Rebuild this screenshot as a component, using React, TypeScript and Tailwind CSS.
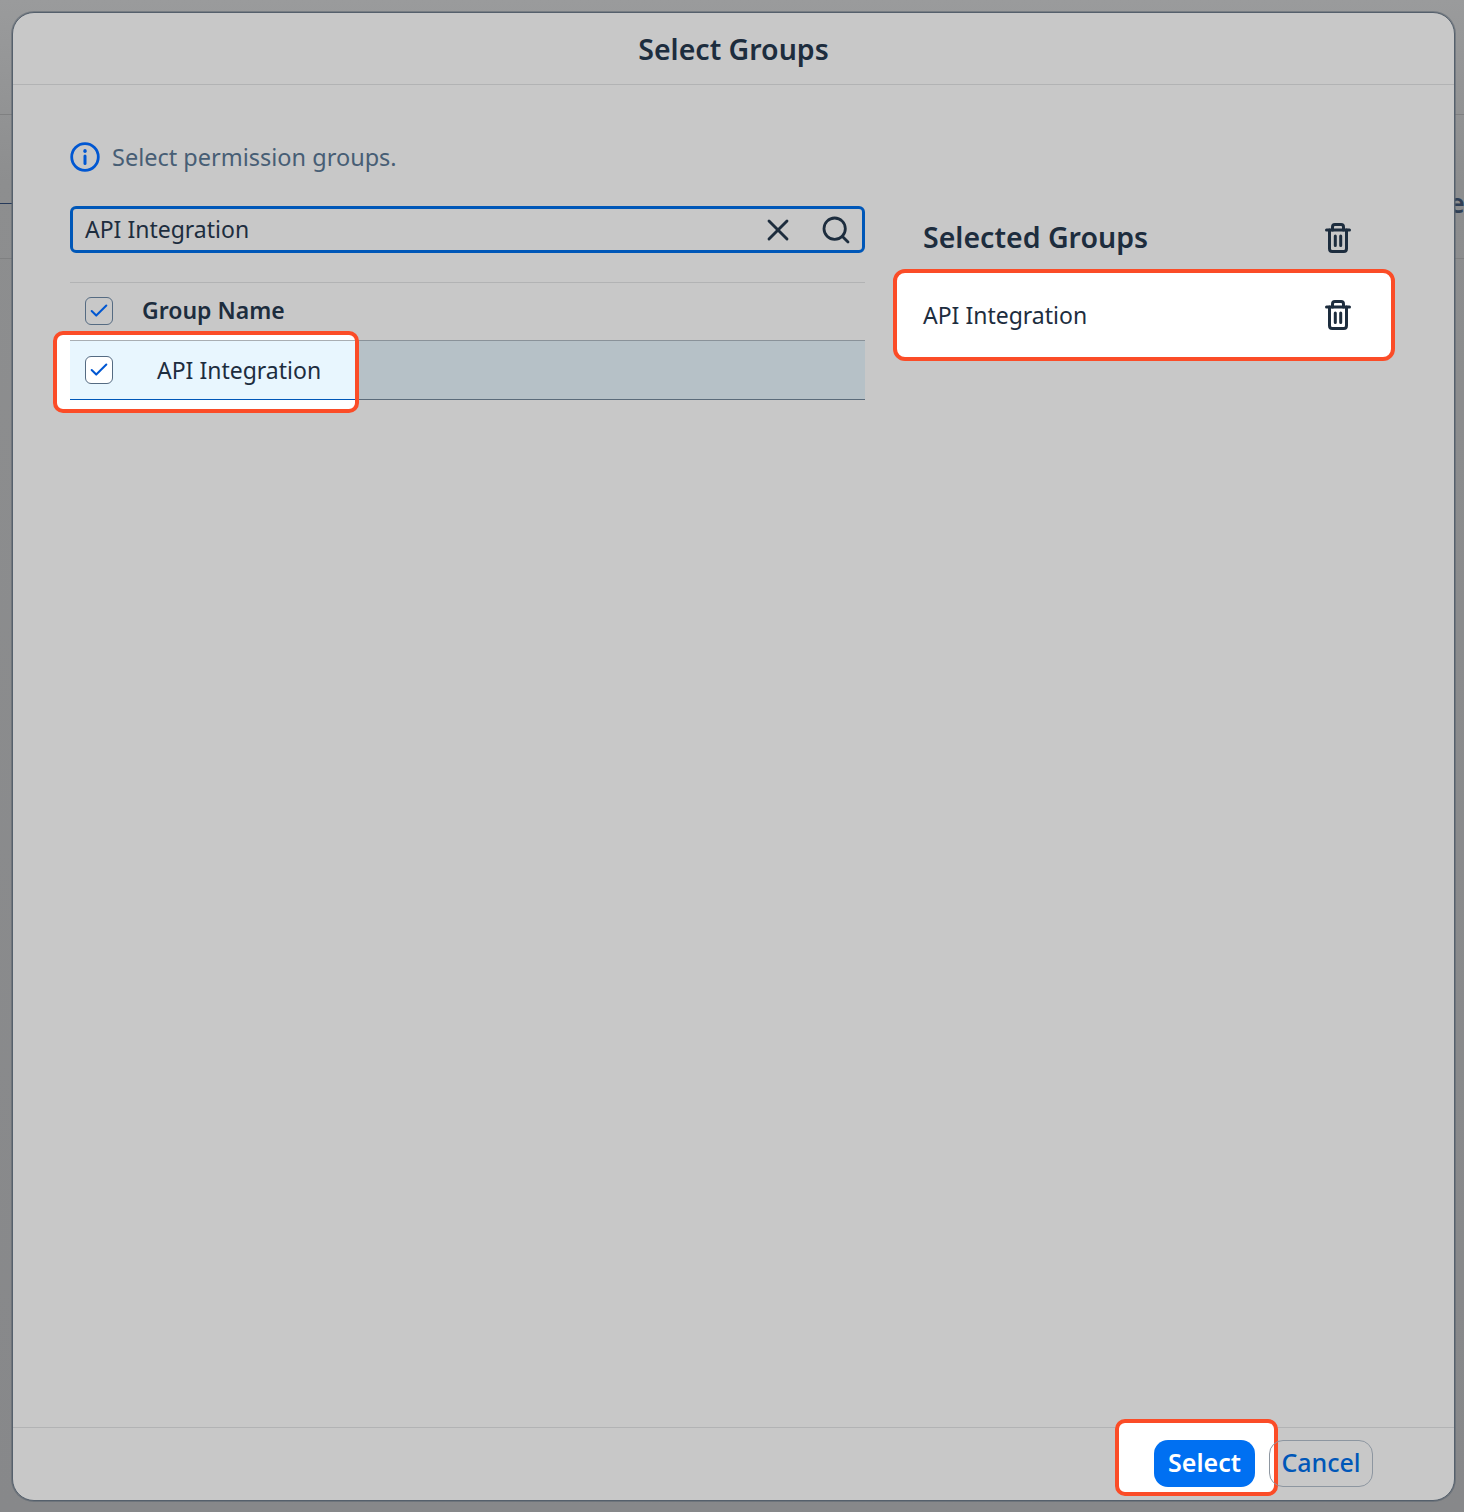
import React from 'react';
import { Search, X, Check } from 'lucide-react';

const font = "font-['Noto_Sans','Open_Sans',sans-serif]";

const TrashIcon: React.FC = () => (
    <svg width="26" height="30" viewBox="0 0 26 30" fill="none" stroke="#1d2d3e" strokeWidth="3" strokeLinecap="round" strokeLinejoin="round">
        <path d="M1.500 7h23" />
        <path d="M7.500 7V4c0-1.400 1-2.500 2.400-2.500h6.200c1.400 0 2.400 1.100 2.400 2.500v3" />
        <path d="M4.500 7v18.500c0 1.700 1.100 3 2.700 3h11.600c1.600 0 2.700-1.300 2.700-3V7" />
        <path d="M10.300 13v9.500M15.700 13v9.500" />
    </svg>
);

const CheckBox: React.FC<{ white?: boolean }> = ({ white }) => (
    <div className={`flex h-[28px] w-[28px] items-center justify-center rounded-[6px] border border-[#556b82] ${white ? 'bg-white' : ''}`}>
        <Check size={22} strokeWidth={2.200} className="text-[#0057d2]" />
    </div>
);

const App: React.FC = () => {
    return (
        <div className={`${font} relative h-[1512px] w-[1464px] overflow-hidden bg-linear-to-b from-[#9a9b9c] via-[#8d8e8f] via-[12%] to-[#87888a] p-3 text-[#1d2d3e]`}>
            {/* page behind the dim layer */}
            <div className="absolute left-0 top-[114px] h-px w-3 bg-[#7f8081]" />
            <div className="absolute left-0 top-[203px] h-px w-3 bg-[#263a5a]" />
            <div className="absolute left-0 top-[258px] h-px w-3 bg-[#7f8081]" />
            <div className="absolute right-0 top-[114px] h-px w-[10px] bg-[#7f8081]" />
            <div className="absolute right-0 top-[258px] h-px w-[10px] bg-[#7f8081]" />
            <span className="absolute left-[1449px] top-[185px] text-[27px] font-semibold leading-[36px] text-[#2f3f55]">e</span>

            <div className="relative flex h-[1489px] w-[1443px] flex-col overflow-hidden rounded-[22px] border border-[#55606c] bg-[#c8c8c8] shadow-[0_0_0_1px_rgba(85,96,108,0.5)]">
                <header className="flex h-[72px] shrink-0 items-center justify-center border-b border-[#b2b3b4] pt-px text-[28.500px] font-semibold">
                    Select Groups
                </header>

                <main className="flex flex-1 gap-[58px] pl-[57px] pt-[56px]">
                    {/* left column */}
                    <section className="w-[795px]">
                        <div className="flex h-[32px] items-center gap-[12px] text-[#475e75]">
                            <svg width="30" height="30" viewBox="0 0 30 30" fill="none" stroke="#0057d2" strokeWidth="2.800" strokeLinecap="round">
                                <circle cx="15" cy="15" r="13.300" />
                                <path d="M15 14v7.500" strokeWidth="3" />
                                <path d="M15 8.800v.4" strokeWidth="3.400" />
                            </svg>
                            <span className="pt-[2px] text-[23.500px] leading-none">Select permission groups.</span>
                        </div>

                        <div className="mt-[33px] flex h-[47px] items-center rounded-[6px] border-[3px] border-[#0057b8] pl-[12px] pr-[10px]">
                            <span className="flex-1 text-[23px] leading-none">API Integration</span>
                            <X size={36} strokeWidth={1.900} className="mr-[24px] text-[#1d2d3e]" />
                            <Search size={32} strokeWidth={2.100} className="text-[#1d2d3e]" />
                        </div>

                        <div className="mt-[29px] flex h-[58px] items-center border-t border-[#b2b3b4] pb-[2px] pl-[15px]">
                            <CheckBox />
                            <span className="ml-[29px] text-[23px] font-semibold leading-none">Group Name</span>
                        </div>

                        {/* annotated row */}
                        <div className="relative h-[60px] border-y border-t-[#8a9299] border-b-[#5b6b7a] bg-[#b6c1c7]">
                            <div className="absolute -top-[10px] left-[-17px] h-[82px] w-[306px] rounded-[10px] border-[4px] border-[#fb4c27] bg-white" />
                            <div className="absolute left-0 -top-px flex h-[60px] w-[285px] items-center border-y border-t-[#a9aeb3] border-b-[#0057b8] bg-[#e8f6fe] pl-[15px]">
                                <CheckBox white />
                                <span className="ml-[44px] text-[23px] leading-none">API Integration</span>
                            </div>
                        </div>
                    </section>

                    {/* right column */}
                    <section className="w-[472px] pt-[63px]">
                        <div className="flex h-[65px] items-center justify-between pr-[44px] pt-[2px]">
                            <h2 className="text-[28.500px] font-semibold leading-none">Selected Groups</h2>
                            <TrashIcon />
                        </div>
                        <div className="-ml-[30px] flex h-[92px] w-[502px] items-center justify-between rounded-[12px] border-[4px] border-[#fb4c27] bg-white pl-[26px] pr-[40px]">
                            <span className="text-[23px] leading-none">API Integration</span>
                            <TrashIcon />
                        </div>
                    </section>
                </main>

                <footer className="relative flex h-[73px] shrink-0 items-center justify-end border-t border-[#b2b3b4] pb-[2px] pr-[81px]">
                    <div className="absolute left-[1102px] top-[-9px] h-[77px] w-[163px] rounded-[10px] border-[4px] border-[#fb4c27] bg-white" />
                    <button className="relative flex h-[47px] w-[101px] items-center justify-center rounded-[14px] bg-[#0070f2] text-[25px] font-semibold text-white">
                        Select
                    </button>
                    <button className="relative ml-[14px] flex h-[47px] w-[104px] items-center justify-center rounded-[14px] border border-[#8d96a0] text-[25px] font-medium text-[#0057b8]">
                        Cancel
                    </button>
                </footer>
            </div>
        </div>
    );
};

export default App;
